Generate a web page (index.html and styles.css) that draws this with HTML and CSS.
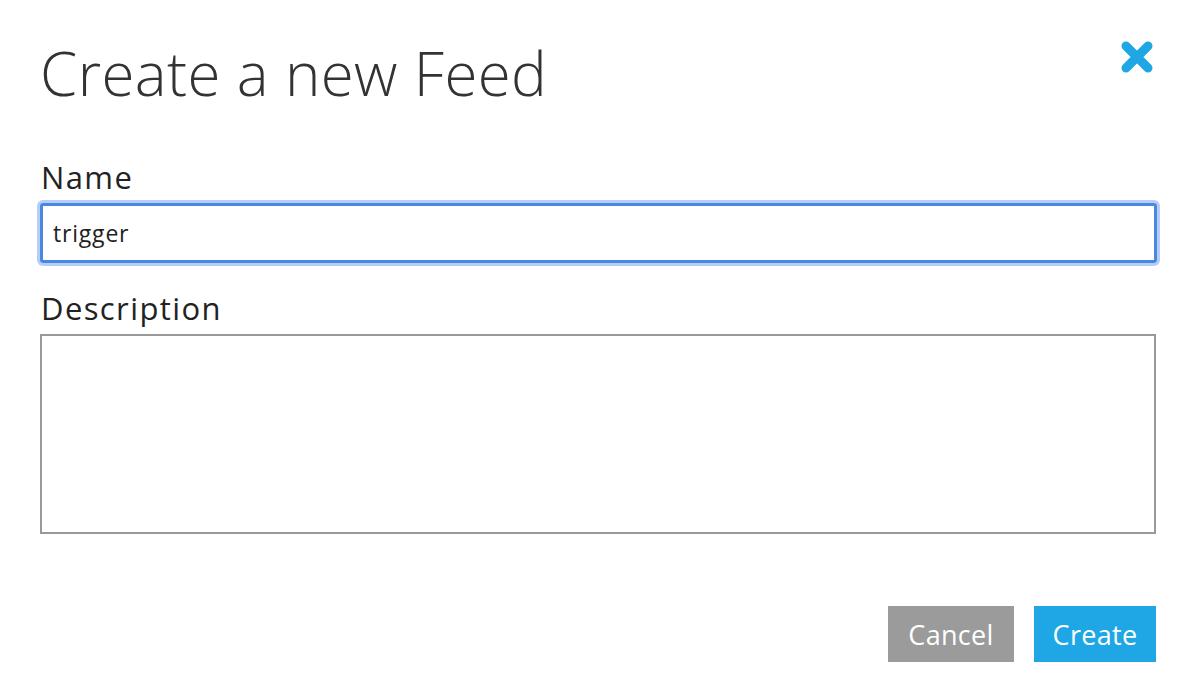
FILE: index.html
```html
<!DOCTYPE html>
<html>
<head>
<meta charset="utf-8">
<link rel="stylesheet" href="styles.css">
</head>
<body>
<div class="dialog">
  <div class="header">
    <h1 class="title">Create a new Feed</h1>
    <button class="close" aria-label="Close">
      <svg width="34" height="34" viewBox="0 0 34 34"><path d="M6 6 L28 28 M28 6 L6 28" stroke="#1ea7e4" stroke-width="9" stroke-linecap="round" fill="none"/></svg>
    </button>
  </div>
  <label class="label">Name</label>
  <div class="input focused">trigger</div>
  <label class="label label-desc">Description</label>
  <div class="textarea"></div>
  <div class="actions">
    <button class="btn btn-cancel">Cancel</button>
    <button class="btn btn-create">Create</button>
  </div>
</div>
</body>
</html>
```
FILE: styles.css
```css
html, body {
  margin: 0;
  padding: 0;
  background: #fff;
}
body {
  font-family: "Open Sans", Lato, sans-serif;
  color: #333;
}
.dialog {
  width: 1116px;
  padding: 0 36px 0 40px;
  display: flex;
  flex-direction: column;
}
.header {
  display: flex;
  justify-content: space-between;
  align-items: flex-start;
  padding-top: 37px;
}
.title {
  margin: 0;
  font-size: 60px;
  font-weight: 300;
  line-height: 72px;
  letter-spacing: 0.4px;
  color: #333;
}
.close {
  border: 0;
  background: none;
  padding: 0;
  width: 34px;
  height: 34px;
  margin-top: 3px;
  margin-right: 2px;
  cursor: pointer;
}
.close svg { display: block; }
.label {
  display: block;
  font-size: 31px;
  font-weight: 400;
  letter-spacing: 1.4px;
  color: #222;
  margin: 50px 0 0 1px;
  line-height: 36px;
}
.label-desc {
  margin-top: 27px;
}
.input {
  margin-top: 8px;
  margin-right: -1px;
  height: 54px;
  border: 3px solid #4a87e0;
  border-radius: 3px;
  box-shadow: 0 0 0 3px #b4cff5;
  font-size: 23px;
  letter-spacing: 0.8px;
  line-height: 54px;
  padding: 0 10px;
  color: #222;
}
.textarea {
  margin-top: 8px;
  height: 196px;
  border: 2px solid #999;
}
.actions {
  display: flex;
  justify-content: flex-end;
  gap: 20px;
  margin-top: 72px;
}
.btn {
  border: 0;
  height: 56px;
  color: #fff;
  font-family: "Open Sans", Lato, sans-serif;
  font-size: 27px;
  letter-spacing: 0.3px;
  padding: 0;
}
.btn-cancel {
  width: 126px;
  background: #9b9b9b;
}
.btn-create {
  width: 122px;
  background: #1ea7e4;
}
```
